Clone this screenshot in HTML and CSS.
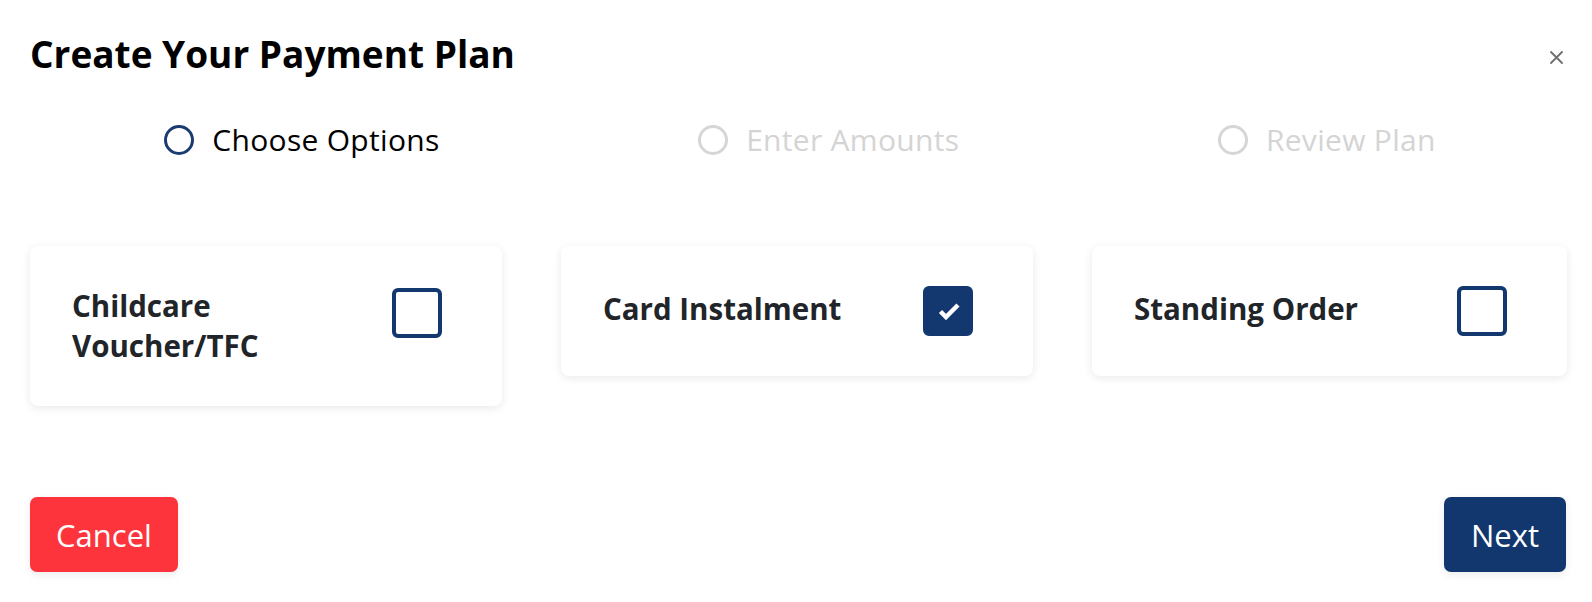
FILE: index.html
```html
<!DOCTYPE html>
<html lang="en">
<head>
<meta charset="utf-8">
<title>Create Your Payment Plan</title>
<link rel="stylesheet" href="styles.css">
</head>
<body>
<div class="modal">
  <header class="modal-header">
    <h1 class="modal-title">Create Your Payment Plan</h1>
    <button class="close" aria-label="Close">
      <svg width="13" height="13" viewBox="0 0 13 13"><path d="M1 1L12 12M12 1L1 12" stroke="#6f6f6f" stroke-width="1.8" stroke-linecap="round"/></svg>
    </button>
  </header>

  <ol class="stepper">
    <li class="step active"><span class="step-dot"></span><span class="step-label">Choose Options</span></li>
    <li class="step"><span class="step-dot"></span><span class="step-label">Enter Amounts</span></li>
    <li class="step"><span class="step-dot"></span><span class="step-label">Review Plan</span></li>
  </ol>

  <div class="options">
    <label class="option-card multi">
      <span class="option-label">Childcare<br>Voucher/TFC</span>
      <span class="checkbox"></span>
    </label>
    <label class="option-card">
      <span class="option-label">Card Instalment</span>
      <span class="checkbox checked">
        <svg width="42" height="42" viewBox="0 0 42 42"><path d="M13.5 21.5L19 27L31 15" fill="none" stroke="#fff" stroke-width="4.5" stroke-linejoin="miter"/></svg>
      </span>
    </label>
    <label class="option-card">
      <span class="option-label">Standing Order</span>
      <span class="checkbox"></span>
    </label>
  </div>

  <footer class="modal-footer">
    <button class="btn btn-cancel">Cancel</button>
    <button class="btn btn-next">Next</button>
  </footer>
</div>
</body>
</html>
```
FILE: styles.css
```css
* { box-sizing: border-box; }
html, body { margin: 0; padding: 0; background: #fff; }
body {
  font-family: "Open Sans", "Noto Sans", "Liberation Sans", sans-serif;
  color: #000;
}
.modal {
  width: 1592px;
  height: 602px;
  padding-top: 32px;
}
.modal-header {
  display: flex;
  justify-content: space-between;
  align-items: flex-start;
  padding: 0 29px 0 30px;
}
.modal-title {
  margin: 0;
  font-size: 37px;
  line-height: 44px;
  font-weight: 700;
  letter-spacing: 0;
  color: #000;
}
.close {
  margin-top: 19px;
  padding: 0;
  border: 0;
  background: none;
  width: 13px;
  height: 13px;
  display: flex;
}
.stepper {
  list-style: none;
  margin: 49px 27px 0 35px;
  padding: 0;
  display: flex;
  justify-content: space-around;
  height: 30px;
}
.step {
  display: flex;
  align-items: center;
  gap: 18px;
  color: #d4d4d4;
  font-size: 30px;
  letter-spacing: 0.3px;
}
.step-dot {
  width: 30px;
  height: 30px;
  border-radius: 50%;
  border: 3px solid #d6d6d6;
  flex: none;
}
.step.active { color: #000; }
.step.active .step-dot { border-color: #1b3c72; }
.step-label { line-height: 30px; }

.options {
  margin: 91px 0 0 30px;
  display: grid;
  grid-template-columns: 472px 472px 475px;
  column-gap: 59px;
  align-items: start;
}
.option-card {
  display: flex;
  justify-content: space-between;
  align-items: center;
  padding: 40px 60px 40px 42px;
  background: #fff;
  border-radius: 8px;
  box-shadow: 0 2px 10px rgba(0, 0, 0, 0.09);
}
.option-card.multi { align-items: flex-start; }
.option-card.multi .checkbox { margin-top: 2px; }
.option-label {
  font-size: 29.5px;
  line-height: 40px;
  font-weight: 700;
  color: #212529;
  margin-bottom: 4px;
}
.option-card.multi .option-label { margin-bottom: 0; }
.checkbox {
  width: 50px;
  height: 50px;
  border: 4px solid #12386f;
  border-radius: 6px;
  flex: none;
  display: flex;
  align-items: center;
  justify-content: center;
}
.checkbox.checked { background: #12386f; }

.modal-footer {
  margin-top: 91px;
  padding: 0 26px 0 30px;
  display: flex;
  justify-content: space-between;
}
.btn {
  height: 75px;
  border: 0;
  border-radius: 7px;
  color: #fff;
  font-family: inherit;
  font-size: 31px;
  padding: 0;
  box-shadow: 0 3px 8px rgba(0, 0, 0, 0.08);
}
.btn-cancel { background: #fe343c; width: 148px; }
.btn-next { background: #12376e; width: 122px; }
```
